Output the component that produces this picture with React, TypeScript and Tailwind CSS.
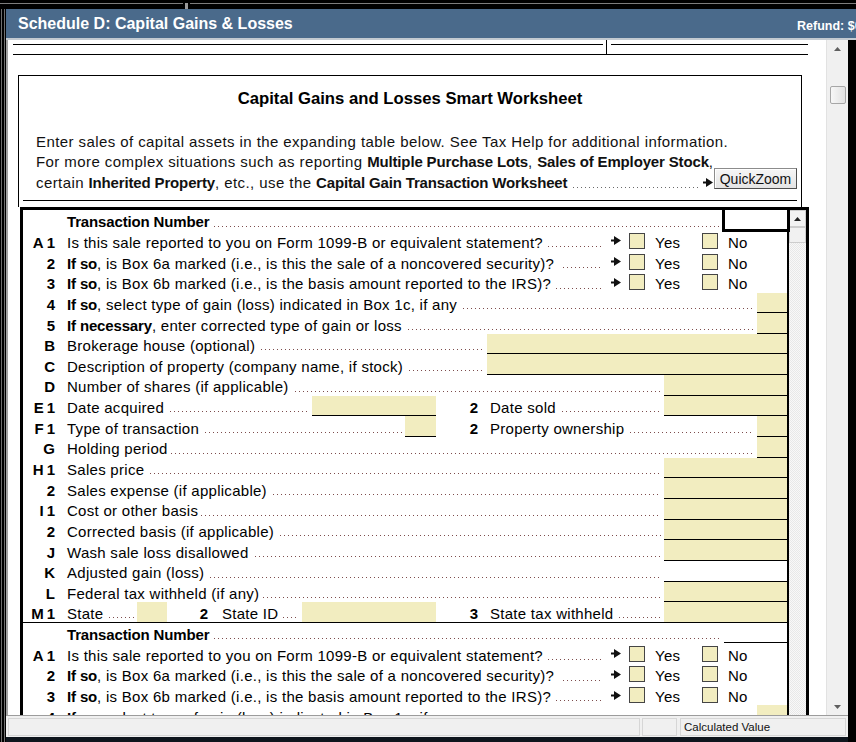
import React from 'react';

// dotted leader that runs from a label to its entry field
function Lead({ className = '' }: { className?: string }) {
  return (
    <div
      className={`mb-[4px] h-px min-w-[4px] flex-1 self-end bg-[linear-gradient(to_right,#7d4d4d_1px,transparent_1px)] bg-[length:4px_1px] bg-repeat-x ${className}`}
    />
  );
}

function T({ children, className = '' }: { children: React.ReactNode; className?: string }) {
  return <span className={`shrink-0 pt-[3px] ${className}`}>{children}</span>;
}

function B({ children }: { children: React.ReactNode }) {
  return <b className="font-bold tracking-[-0.15px]">{children}</b>;
}

function Field({ w, white = false, line = true }: { w: string; white?: boolean; line?: boolean }) {
  return (
    <div
      className={`${w} shrink-0 self-stretch ${white ? 'bg-white' : 'bg-[#f2edc0]'} ${line ? 'border-b border-black' : ''}`}
    />
  );
}

function Pointer() {
  return (
    <svg width="10" height="9" viewBox="0 0 10 9" className="shrink-0">
      <path d="M0 3.5h3V0l7 4.5L3 9V5.5H0z" fill="#111" />
    </svg>
  );
}

function Tri({ down = false, color = '#222' }: { down?: boolean; color?: string }) {
  return (
    <svg width="7" height="4" viewBox="0 0 7 4">
      <path d={down ? 'M0 0h7L3.5 4z' : 'M3.5 0L7 4H0z'} fill={color} />
    </svg>
  );
}

function Box() {
  return <span className="h-[16px] w-[16px] shrink-0 border border-[#454545] bg-[#f2edc0]" />;
}

function YesNo() {
  return (
    <div className="flex w-[182px] shrink-0 items-center pl-[6px]">
      <Pointer />
      <span className="ml-[8px] flex">
        <Box />
      </span>
      <T className="ml-[10px] w-[47px]">Yes</T>
      <Box />
      <T className="ml-[10px]">No</T>
    </div>
  );
}

function Tag({ l, n }: { l?: string; n?: string }) {
  return (
    <>
      {l}
      {n && <span className={l ? 'ml-[3px]' : ''}>{n}</span>}
    </>
  );
}

function Row({ tag, children, last = false }: { tag?: React.ReactNode; children: React.ReactNode; last?: boolean }) {
  return (
    <div className={`flex h-[20.65px] items-center ${last ? 'border-b border-black' : ''}`}>
      <div className="w-[32px] shrink-0 pt-[3px] text-right font-bold tracking-normal">{tag}</div>
      <div className="ml-[12px] flex min-w-0 flex-1 items-center self-stretch whitespace-nowrap">{children}</div>
    </div>
  );
}

function Sub({ n, w }: { n: string; w: string }) {
  return <div className={`${w} shrink-0 pt-[3px] text-right font-bold tracking-normal`}>{n}</div>;
}

function TransactionBlock() {
  return (
    <>
      <Row tag={<Tag l="A" n="1" />}>
        <T>Is this sale reported to you on Form 1099-B or equivalent statement?</T>
        <Lead className="ml-[5px] mr-[2px]" />
        <YesNo />
      </Row>
      <Row tag={<Tag n="2" />}>
        <T>
          <B>If so</B>, is Box 6a marked (i.e., is this the sale of a noncovered security)?
        </T>
        <Lead className="ml-[9px] mr-[2px]" />
        <YesNo />
      </Row>
      <Row tag={<Tag n="3" />}>
        <T>
          <B>If so</B>, is Box 6b marked (i.e., is the basis amount reported to the IRS)?
        </T>
        <Lead className="ml-[5px] mr-[2px]" />
        <YesNo />
      </Row>
      <Row tag={<Tag n="4" />}>
        <T>
          <B>If so</B>, select type of gain (loss) indicated in Box 1c, if any
        </T>
        <Lead className="ml-[6px] mr-[3px]" />
        <Field w="w-[30px]" />
      </Row>
    </>
  );
}

function Rows() {
  return (
    <div className="w-[766px] shrink-0 border-r-2 border-black">
      <Row>
        <T>
          <B>Transaction Number</B>
        </T>
        <Lead className="ml-[5px] mr-[2px]" />
        <div className="w-[66px] shrink-0" />
      </Row>
      <TransactionBlock />
      <Row tag={<Tag n="5" />}>
        <T>
          <B>If necessary</B>, enter corrected type of gain or loss
        </T>
        <Lead className="ml-[6px] mr-[3px]" />
        <Field w="w-[30px]" />
      </Row>
      <Row tag={<Tag l="B" />}>
        <T>Brokerage house (optional)</T>
        <Lead className="ml-[6px] mr-[3px]" />
        <Field w="w-[300px]" />
      </Row>
      <Row tag={<Tag l="C" />}>
        <T>Description of property (company name, if stock)</T>
        <Lead className="ml-[6px] mr-[3px]" />
        <Field w="w-[300px]" />
      </Row>
      <Row tag={<Tag l="D" />}>
        <T>Number of shares (if applicable)</T>
        <Lead className="ml-[6px] mr-[3px]" />
        <Field w="w-[123px]" />
      </Row>
      <Row tag={<Tag l="E" n="1" />}>
        <div className="flex w-[369px] shrink-0 items-center self-stretch">
          <T>Date acquired</T>
          <Lead className="ml-[6px] mr-[3px]" />
          <Field w="w-[124px]" />
        </div>
        <Sub n="2" w="w-[42px]" />
        <T className="ml-[12px]">Date sold</T>
        <Lead className="ml-[6px] mr-[3px]" />
        <Field w="w-[123px]" />
      </Row>
      <Row tag={<Tag l="F" n="1" />}>
        <div className="flex w-[369px] shrink-0 items-center self-stretch">
          <T>Type of transaction</T>
          <Lead className="ml-[6px] mr-[3px]" />
          <Field w="w-[31px]" />
        </div>
        <Sub n="2" w="w-[42px]" />
        <T className="ml-[12px]">Property ownership</T>
        <Lead className="ml-[6px] mr-[3px]" />
        <Field w="w-[30px]" />
      </Row>
      <Row tag={<Tag l="G" />}>
        <T>Holding period</T>
        <Lead className="ml-[3px] mr-[3px]" />
        <Field w="w-[30px]" />
      </Row>
      <Row tag={<Tag l="H" n="1" />}>
        <T>Sales price</T>
        <Lead className="ml-[6px] mr-[3px]" />
        <Field w="w-[123px]" />
      </Row>
      <Row tag={<Tag n="2" />}>
        <T>Sales expense (if applicable)</T>
        <Lead className="ml-[6px] mr-[3px]" />
        <Field w="w-[123px]" />
      </Row>
      <Row tag={<Tag l="I" n="1" />}>
        <T>Cost or other basis</T>
        <Lead className="ml-[3px] mr-[3px]" />
        <Field w="w-[123px]" />
      </Row>
      <Row tag={<Tag n="2" />}>
        <T>Corrected basis (if applicable)</T>
        <Lead className="ml-[6px] mr-[3px]" />
        <Field w="w-[123px]" />
      </Row>
      <Row tag={<Tag l="J" />}>
        <T>Wash sale loss disallowed</T>
        <Lead className="ml-[6px] mr-[3px]" />
        <Field w="w-[123px]" />
      </Row>
      <Row tag={<Tag l="K" />}>
        <T>Adjusted gain (loss)</T>
        <Lead className="ml-[6px] mr-[3px]" />
        <Field w="w-[123px]" white />
      </Row>
      <Row tag={<Tag l="L" />}>
        <T>Federal tax withheld (if any)</T>
        <Lead className="ml-[4px] mr-[3px]" />
        <Field w="w-[123px]" />
      </Row>
      <Row tag={<Tag l="M" n="1" />} last>
        <div className="flex w-[100px] shrink-0 items-center self-stretch">
          <T>State</T>
          <Lead className="ml-[6px] mr-[3px]" />
          <Field w="w-[30px]" line={false} />
        </div>
        <Sub n="2" w="w-[41px]" />
        <div className="ml-[14px] flex w-[214px] shrink-0 items-center self-stretch">
          <T>State ID</T>
          <Lead className="ml-[5px] mr-[3px]" />
          <Field w="w-[134px]" line={false} />
        </div>
        <Sub n="3" w="w-[42px]" />
        <T className="ml-[12px]">State tax withheld</T>
        <Lead className="ml-[6px] mr-[3px]" />
        <Field w="w-[123px]" line={false} />
      </Row>
      <Row>
        <T>
          <B>Transaction Number</B>
        </T>
        <Lead className="ml-[5px] mr-[3px]" />
        <Field w="w-[63px]" white />
      </Row>
      <TransactionBlock />
    </div>
  );
}

function Worksheet() {
  return (
    <>
      <section className="ml-[10px] mt-[20px] flex h-[132px] w-[784px] flex-col border-x border-t border-black">
        <h1 className="mt-[13px] flex h-[20px] items-center justify-center text-[16.7px] font-bold tracking-normal">
          Capital Gains and Losses Smart Worksheet
        </h1>
        <div className="mt-[22px] pl-[17px] pr-[4px] tracking-[0.42px] text-[#111]">
          <div className="flex h-[20.5px] items-center">
            <span>Enter sales of capital assets in the expanding table below. See Tax Help for additional information.</span>
          </div>
          <div className="flex h-[20.5px] items-center">
            <span>
              For more complex situations such as reporting <B>Multiple Purchase Lots</B>, <B>Sales of Employer Stock</B>,
            </span>
          </div>
          <div className="flex h-[20.5px] items-center">
            <span className="shrink-0">
              certain <B>Inherited Property</B>, etc., use the <B>Capital Gain Transaction Worksheet</B>
            </span>
            <div className="mb-[5px] ml-[6px] mr-[5px] h-px flex-1 self-end bg-[linear-gradient(to_right,#6a6a6a_1px,transparent_1px)] bg-[length:4px_1px] bg-repeat-x" />
            <Pointer />
            <button className="mb-[7px] ml-[1px] h-[21px] w-[83px] shrink-0 border border-[#8c8c8c] border-b-[#4e4e4e] border-r-[#4e4e4e] bg-[linear-gradient(#f6f6f6,#e4e4e4)] text-[14px] tracking-normal shadow-[inset_1px_1px_0_#ffffff]">
              QuickZoom
            </button>
          </div>
        </div>
        <div className="mx-[4px] mt-[7px] border-t border-black" />
      </section>

      <div className="relative ml-[12px] flex w-[789px] border-x-[3px] border-t-[3px] border-black">
        <Rows />
        {/* table scrollbar */}
        <div className="flex min-w-0 flex-1 flex-col bg-[repeating-conic-gradient(#e8e8e8_0%_25%,#f8f8f8_0%_50%)] bg-[length:2px_2px]">
          <div className="flex h-[17px] items-center justify-center border border-[#cdcdcd] bg-[#f2f2f2]">
            <Tri />
          </div>
          <div className="h-[16px] border border-[#cdcdcd] bg-[#f1f1f1]" />
        </div>
        {/* active transaction number cell */}
        <div className="absolute left-[699px] top-[-3px] z-10 h-[25px] w-[68px] border-[3px] border-black bg-white" />
      </div>
    </>
  );
}

export default function App() {
  return (
    <div className="flex h-[742px] w-[856px] flex-col overflow-hidden bg-black font-['Liberation_Sans',Arial,sans-serif] text-[15px] leading-none tracking-[0.28px] text-black">
      {/* parent window frame */}
      <div className="flex h-[9px] shrink-0 items-start pt-[3px]">
        <div className="h-px w-[183px] bg-[#7d7d7d]" />
        <div className="ml-[2px] h-[6px] w-[3px] bg-[#9a9a9a]" />
        <div className="ml-[2px] h-px flex-1 bg-[#7d7d7d]" />
      </div>
      <div className="flex min-h-0 flex-1">
        <div className="flex w-[6px] shrink-0 justify-around">
          <div className="w-px bg-[#6f6f6f]" />
          <div className="w-px bg-[#6f6f6f]" />
        </div>
        <div className="flex min-w-0 flex-1 flex-col">
          <header className="flex h-[29px] shrink-0 items-center bg-[#4a6a8b] text-white">
            <div className="flex-1 pl-[12px] text-[16px] font-bold tracking-normal">Schedule D: Capital Gains &amp; Losses</div>
            <div className="mt-[6px] w-[59px] shrink-0 overflow-hidden whitespace-nowrap text-[12.5px] font-bold tracking-normal">
              Refund: $0
            </div>
          </header>
          <div className="h-[2px] shrink-0 bg-[#c3cad1]" />
          <div className="flex min-h-0 flex-1">
            <div className="flex min-w-0 flex-1 flex-col">
              <div className="flex min-h-0 flex-1">
                <div className="w-[2px] shrink-0 bg-[#a3a3a3]" />
                <main className="min-w-0 flex-1 overflow-hidden bg-white">
                  <div className="ml-[5px] flex h-[15px] w-[795px] items-start border-b border-black">
                    <div className="mt-[4px] w-[590px] border-t border-black" />
                    <div className="ml-[3px] w-px self-stretch bg-black" />
                    <div className="ml-[4px] mt-[4px] flex-1 border-t border-black" />
                  </div>
                  <Worksheet />
                </main>
                {/* page scrollbar */}
                <div className="flex w-[22px] shrink-0 flex-col border-l border-[#e2e2e2] bg-[#f0f0f0]">
                  <div className="flex h-[17px] items-center justify-center">
                    <Tri color="#5f5f5f" />
                  </div>
                  <div className="ml-[3px] mt-[29px] h-[18px] w-[16px] rounded-[2px] border border-[#a6a6a6] bg-[linear-gradient(to_right,#f7f7f7,#e1e1e1)]" />
                  <div className="flex-1" />
                  <div className="flex h-[17px] items-center justify-center">
                    <Tri down color="#5f5f5f" />
                  </div>
                </div>
              </div>
              {/* status bar */}
              <div className="flex h-[22px] shrink-0 items-center border-t border-[#9c9c9c] bg-[#f0f0f0] px-[2px] text-[11.5px] tracking-normal">
                <div className="h-[18px] flex-1 border border-[#d6d6d6]" />
                <div className="ml-[2px] h-[18px] w-[35px] border border-[#d6d6d6]" />
                <div className="ml-[3px] flex h-[18px] w-[166px] items-center border border-[#d6d6d6] pl-[3px] pt-[2px] text-[#111]">
                  Calculated Value
                </div>
              </div>
              <div className="h-[5px] shrink-0 bg-[#0e151d]" />
            </div>
            <div className="w-[8px] shrink-0 bg-black" />
          </div>
        </div>
      </div>
    </div>
  );
}
